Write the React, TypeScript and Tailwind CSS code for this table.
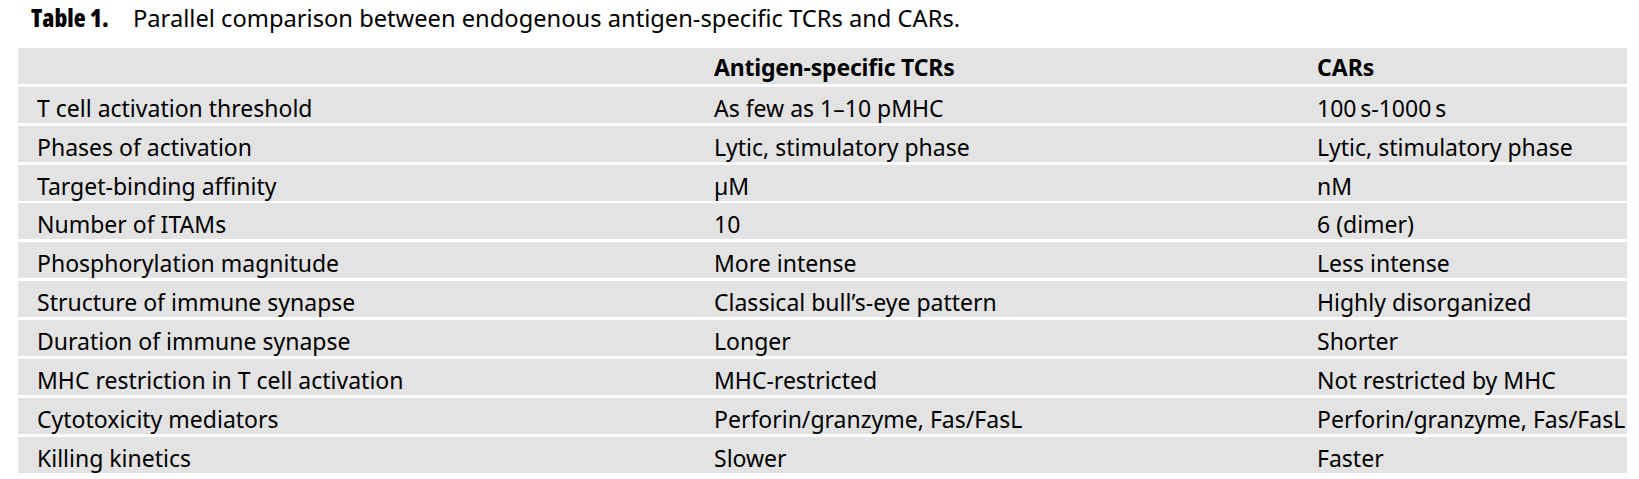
const rows = [
  ["T cell activation threshold", "As few as 1–10 pMHC", "100\u2009s-1000\u2009s"],
  ["Phases of activation", "Lytic, stimulatory phase", "Lytic, stimulatory phase"],
  ["Target-binding affinity", "µM", "nM"],
  ["Number of ITAMs", "10", "6 (dimer)"],
  ["Phosphorylation magnitude", "More intense", "Less intense"],
  ["Structure of immune synapse", "Classical bull’s-eye pattern", "Highly disorganized"],
  ["Duration of immune synapse", "Longer", "Shorter"],
  ["MHC restriction in T cell activation", "MHC-restricted", "Not restricted by MHC"],
  ["Cytotoxicity mediators", "Perforin/granzyme, Fas/FasL", "Perforin/granzyme, Fas/FasL"],
  ["Killing kinetics", "Slower", "Faster"],
];

export default function App() {
  return (
    <div className="min-h-screen bg-white text-black font-['Noto_Sans',sans-serif] text-[23px] pt-[3px]">
      {/* Caption */}
      <div className="flex items-baseline pl-[31px] leading-[30px] whitespace-nowrap">
        <span className="w-[102px] shrink-0 text-[24.5px] font-extrabold font-['Open_Sans',sans-serif] [font-stretch:75%]">Table 1.</span>
        <span className="text-[23.7px]">Parallel comparison between endogenous antigen-specific TCRs and CARs.</span>
      </div>

      {/* Table */}
      <div className="mt-[15px] ml-[18px] w-[1609px] flex flex-col gap-[2.87px]">
        <div className="grid grid-cols-[677px_603px_1fr] h-[36px] bg-[#e3e3e3] font-bold leading-[30px] pt-[4px] whitespace-nowrap">
          <div className="pl-[19px]"></div>
          <div className="pl-[19px] tracking-[-0.2px]">Antigen-specific TCRs</div>
          <div className="pl-[19px]">CARs</div>
        </div>
        {rows.map((r, i) => (
          <div
            key={i}
            className="grid grid-cols-[677px_603px_1fr] h-[36px] bg-[#e3e3e3] leading-[30px] pt-[6px] whitespace-nowrap"
          >
            <div className="pl-[19px]">{r[0]}</div>
            <div className="pl-[19px]">{r[1]}</div>
            <div className="pl-[19px]">{r[2]}</div>
          </div>
        ))}
      </div>
    </div>
  );
}
